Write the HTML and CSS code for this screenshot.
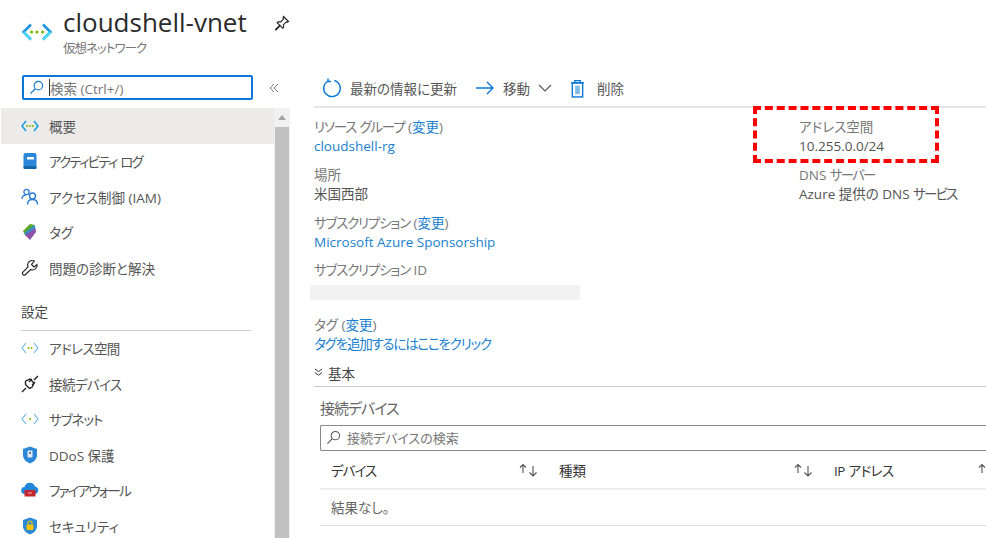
FILE: index.html
```html
<!DOCTYPE html>
<html lang="ja">
<head>
<meta charset="utf-8">
<title>cloudshell-vnet</title>
<link rel="stylesheet" href="styles.css">
</head>
<body>
<div class="app">
  <header class="blade-head">
    <svg class="head-icon" viewBox="0 0 32 20" width="32" height="20"><path d="M10 2.500 2.500 10l7.500 7.500h0" fill="none" stroke="#1f95e2" stroke-width="2.600"/><path d="m22 2.500 7.500 7.500-7.500 7.500" fill="none" stroke="#1f95e2" stroke-width="2.600"/><path d="M2.500 10l7.500 7.500M29.500 10 22 17.500" fill="none" stroke="#4fd6f5" stroke-width="2.600"/><circle cx="10.500" cy="10" r="1.600" fill="#7fba00"/><circle cx="16" cy="10" r="1.600" fill="#7fba00"/><circle cx="21.500" cy="10" r="1.600" fill="#7fba00"/></svg>
    <div class="head-text">
      <h1>cloudshell-vnet</h1>
      <p class="tight">仮想ネットワーク</p>
    </div>
    <svg class="pin" viewBox="0 0 16 16" width="16" height="16"><path d="m9.500 1.500 5 5-1.200.8-1-.4-2.800 2.800.2 2.600-1 1-2.500-2.700-4.200 4.400-.5-.5 4.300-4.300-2.700-2.500 1-1 2.600.2 2.800-2.800-.4-1z" fill="none" stroke="#222" stroke-width="1.100"/></svg>
  </header>
  <div class="blade-body">
    <aside class="side">
      <div class="side-search-row">
        <div class="side-search">
          <svg viewBox="0 0 16 16" width="15" height="15"><circle cx="10" cy="6" r="4.500" fill="none" stroke="#0a78d4" stroke-width="1.200"/><path d="M6.700 9.300 1.500 14.500" stroke="#0a78d4" stroke-width="1.300"/></svg>
          <span class="caret"></span><span class="ph">検索 (Ctrl+/)</span>
        </div>
        <svg class="collapse" viewBox="0 0 10 10" width="10" height="10"><path d="M5 1 1 5l4 4M9 1 5 5l4 4" fill="none" stroke="#777" stroke-width="1"/></svg>
      </div>
      <div class="side-scroll">
        <nav class="menu">
          <a class="item active"><svg class="ic" viewBox="0 0 18 12"><path d="M5 1 1 6l4 5M13 1l4 5-4 5" fill="none" stroke="#1b9fe0" stroke-width="1.600"/><circle cx="6" cy="6" r="1" fill="#7fba00"/><circle cx="9" cy="6" r="1" fill="#7fba00"/><circle cx="12" cy="6" r="1" fill="#7fba00"/></svg>概要</a>
          <a class="item"><svg class="ic" viewBox="0 0 18 18"><rect x="2.500" y="1" width="13" height="16" rx="2" fill="#2b88d8"/><rect x="2.500" y="14" width="13" height="3" rx="1" fill="#1565a8"/><rect x="6" y="5" width="7" height="2.500" fill="#fff"/></svg><span class="tighter">アクティビティ ログ</span></a>
          <a class="item"><svg class="ic" viewBox="0 0 18 18"><circle cx="5.500" cy="4" r="2.600" fill="none" stroke="#2b7cd3" stroke-width="1.300"/><path d="M1 11c0-2.500 1.500-4 4-4" fill="none" stroke="#2b7cd3" stroke-width="1.300"/><circle cx="11.500" cy="8" r="3" fill="none" stroke="#2b7cd3" stroke-width="1.400"/><path d="M6.500 16.500c0-3 2-5 5-5s5 2 5 5" fill="none" stroke="#2b7cd3" stroke-width="1.400"/></svg>アクセス制御 (IAM)</a>
          <a class="item"><svg class="ic" viewBox="0 0 18 18"><path d="M2 8 9 1l5 1-10 10z" fill="#5ea52c"/><path d="m3.500 10 10-8 1 3-10 8z" fill="#2f8fd0"/><path d="m4 12 10.500-7 .5 4-6 8z" fill="#8a53a8"/></svg>タグ</a>
          <a class="item"><svg class="ic" viewBox="0 0 18 18"><path d="M11 1.500a4.500 4.500 0 0 0-4 6.300L1.500 13.500a1.800 1.800 0 0 0 0 1.500l1 1a1.800 1.800 0 0 0 1.500 0l5.700-5.500A4.500 4.500 0 0 0 16 5.500l-3 2.500-2.500-2.500 2.800-3.400A4.500 4.500 0 0 0 11 1.500z" fill="none" stroke="#222" stroke-width="1.100"/></svg>問題の診断と解決</a>
        </nav>
        <h2 class="side-group">設定</h2>
        <nav class="menu">
          <a class="item"><svg class="ic" viewBox="0 0 18 12"><path d="M5 1 1 6l4 5M13 1l4 5-4 5" fill="none" stroke="#62b5e5" stroke-width="1.100"/><circle cx="7.500" cy="6" r="1" fill="#7fba00"/><circle cx="10.500" cy="6" r="1" fill="#7fba00"/></svg><span class="tight-s">アドレス空間</span></a>
          <a class="item"><svg class="ic" viewBox="0 0 18 18"><path d="M1 17l4-4M13 5l4-4M4.500 9.500l4 4 2-1a3 3 0 0 0 1-1l1.500-3.500-4-4-3.500 1.500a3 3 0 0 0-1 1z" fill="none" stroke="#222" stroke-width="1.400"/><path d="m8 7 3-3M11 10l3-3" stroke="#222" stroke-width="1.200"/></svg><span class="tight-s">接続デバイス</span></a>
          <a class="item"><svg class="ic" viewBox="0 0 18 12"><path d="M5 1 1 6l4 5M13 1l4 5-4 5" fill="none" stroke="#62b5e5" stroke-width="1.100"/><circle cx="9" cy="6" r="1.100" fill="#7fba00"/></svg><span class="tight">サブネット</span></a>
          <a class="item"><svg class="ic" viewBox="0 0 18 18"><path d="M9 .5 16 3v6c0 4-3 7-7 8.500C5 16 2 13 2 9V3z" fill="#2b88d8"/><rect x="6.500" y="4.500" width="5" height="7" rx="1" fill="#dfeaf4"/><rect x="8" y="6" width="2" height="2" fill="#5a7f9e"/></svg>DDoS 保護</a>
          <a class="item"><svg class="ic" viewBox="0 0 18 18"><path d="M4 13a3.500 3.500 0 0 1-.5-7A5.500 5.500 0 0 1 14 5.500a3.800 3.800 0 0 1 0 7.500z" fill="#1f86d9"/><rect x="3.500" y="9" width="11" height="6.500" fill="#c4262e"/><path d="M7 12h4" stroke="#f3b0b0" stroke-width="1"/></svg><span class="tighter">ファイアウォール</span></a>
          <a class="item"><svg class="ic" viewBox="0 0 18 18"><path d="M9 .5 16 3v6c0 4-3 7-7 8.500C5 16 2 13 2 9V3z" fill="#2b88d8"/><rect x="5.500" y="7.500" width="7" height="5.500" rx="1" fill="#f2c200"/><path d="M7 7.500V6a2 2 0 0 1 4 0v1.500" fill="none" stroke="#f2c200" stroke-width="1.200"/></svg>セキュリティ</a>
        </nav>
        <div class="scrollbar"><span class="arrow"></span><span class="thumb"></span></div>
      </div>
    </aside>
    <main class="main">
      <div class="toolbar">
        <span class="tool"><svg viewBox="0 0 20 20" width="20" height="20"><path d="M12.300 2.300A8.300 8.300 0 1 1 6 3" fill="none" stroke="#0a78d4" stroke-width="1.400"/><path d="M6 .5V3.500H9" fill="none" stroke="#0a78d4" stroke-width="1.400"/></svg>最新の情報に更新</span>
        <span class="tool"><svg viewBox="0 0 20 14" width="20" height="14"><path d="M1 7h17M12 1l6 6-6 6" fill="none" stroke="#0a78d4" stroke-width="1.400"/></svg>移動<svg class="chev" viewBox="0 0 14 8" width="14" height="8"><path d="m1 1 6 6 6-6" fill="none" stroke="#555" stroke-width="1.100"/></svg></span>
        <span class="tool tool-del"><svg viewBox="0 0 16 20" width="15" height="19"><path d="M1 4h14M5 4V1.500h6V4" fill="none" stroke="#0a78d4" stroke-width="1.400"/><rect x="2.500" y="4" width="11" height="15" fill="none" stroke="#0a78d4" stroke-width="1.500"/><rect x="5.500" y="7" width="5" height="9" fill="#7fbde8"/></svg>削除</span>
      </div>
      <section class="props">
        <div class="col-left">
          <dl class="prop"><dt><span class="tight-m">リソース グループ</span> (<a>変更</a>)</dt><dd><a>cloudshell-rg</a></dd></dl>
          <dl class="prop"><dt>場所</dt><dd>米国西部</dd></dl>
          <dl class="prop"><dt><span class="tight-m">サブスクリプション</span> (<a>変更</a>)</dt><dd><a>Microsoft Azure Sponsorship</a></dd></dl>
          <dl class="prop"><dt><span class="tight-m">サブスクリプション</span> ID</dt><dd class="masked"></dd></dl>
        </div>
        <div class="col-right">
          <dl class="prop"><dt>アドレス空間</dt><dd>10.255.0.0/24</dd></dl>
          <dl class="prop"><dt>DNS <span class="tighter">サーバー</span></dt><dd>Azure 提供の DNS <span class="tighter">サービス</span></dd></dl>
        </div>
        <div class="callout"></div>
      </section>
      <dl class="prop tags"><dt>タグ (<a>変更</a>)</dt><dd><a class="tight-m">タグを追加するにはここをクリック</a></dd></dl>
      <div class="section-head"><svg viewBox="0 0 10 10" width="9" height="9"><path d="m1 1 4 3 4-3M1 5l4 3 4-3" fill="none" stroke="#333" stroke-width="1.100"/></svg>基本</div>
      <div class="devices">
        <h3 class="tight">接続デバイス</h3>
        <div class="dev-search"><svg viewBox="0 0 16 16" width="15" height="15"><circle cx="10" cy="6" r="4.500" fill="none" stroke="#555" stroke-width="1.100"/><path d="M6.700 9.300 1.500 14.500" stroke="#555" stroke-width="1.200"/></svg>接続デバイスの検索</div>
        <div class="table-head">
          <span class="th th-a"><span class="tight">デバイス</span><svg class="sort" viewBox="0 0 20 14" width="20" height="14"><path d="M4 10V2M1 4.500 4 1.500l3 3M14 3v9.500M10.500 9.500l3.500 3.500 3.500-3.500" fill="none" stroke="#555" stroke-width="1.100"/></svg></span>
          <span class="th th-b">種類<svg class="sort" viewBox="0 0 20 14" width="20" height="14"><path d="M4 10V2M1 4.500 4 1.500l3 3M14 3v9.500M10.500 9.500l3.500 3.500 3.500-3.500" fill="none" stroke="#555" stroke-width="1.100"/></svg></span>
          <span class="th th-c"><span class="tight-s">IP アドレス</span><svg class="sort" viewBox="0 0 20 14" width="20" height="14"><path d="M4 10V2M1 4.500 4 1.500l3 3M14 3v9.500M10.500 9.500l3.500 3.500 3.500-3.500" fill="none" stroke="#555" stroke-width="1.100"/></svg></span>
        </div>
        <div class="table-row">結果なし。</div>
      </div>
    </main>
  </div>
</div>
</body>
</html>
```

FILE: styles.css
```css
* { box-sizing: border-box; }
html, body { margin: 0; height: 100%; overflow: hidden; background: #fff; }
body { font-family: "Open Sans", "Noto Sans CJK JP", sans-serif; font-size: 13px; color: #555; font-feature-settings: "palt"; }
a { color: #1a7fcf; text-decoration: none; }
dl, dd, dt, h1, h2, h3, p { margin: 0; font-weight: 400; }

.tight-s { letter-spacing: -.6px; word-spacing: 1px; }
.tight-m { letter-spacing: -1.200px; word-spacing: 1px; }
.tight { letter-spacing: -1px; }
.tighter { letter-spacing: -1.800px; word-spacing: 2px; }

.app { width: 986px; height: 538px; overflow: hidden; }

.blade-head { height: 70px; display: flex; align-items: flex-start; padding: 4px 0 0 21px; }
.head-icon { margin-top: 18px; flex: none; }
.head-text { margin-left: 10px; width: 211px; }
.head-text h1 { font-size: 26px; line-height: 36px; color: #2b2b2b; white-space: nowrap; }
.head-text p { font-size: 12.500px; line-height: 12px; color: #777; margin-top: 3px; }
.pin { margin-top: 11px; flex: none; }

.blade-body { display: flex; height: 468px; }

.side { width: 290px; flex: none; }
.side-search-row { height: 38px; display: flex; align-items: flex-start; padding-left: 22px; padding-top: 5px; }
.side-search { width: 231px; height: 25px; border: 2px solid #0a78d4; border-radius: 2px; display: flex; align-items: center; padding-left: 5px; }
.caret { width: 1px; height: 17px; background: #333; margin: 0 0 0 5px; }
.ph { color: #777; font-size: 13.500px; }
.collapse { margin-left: 16px; margin-top: 8px; flex: none; }

.side-scroll { position: relative; height: 430px; overflow: hidden; padding-right: 16px; }
.menu { display: flex; flex-direction: column; margin-left: 1px; }
.item { height: 35.500px; display: flex; align-items: center; padding-left: 20px; color: #555; font-size: 13.500px; white-space: nowrap; }
.item.active { background: #edebe9; }
.ic { width: 18px; height: 18px; margin-right: 10px; flex: none; }
.side-group { margin: 9px 22px 0 21px; width: 230px; height: 36px; border-bottom: 1px solid #ccc; font-size: 13.500px; line-height: 34px; color: #444; }

.scrollbar { position: absolute; top: 0; right: 0; width: 16px; height: 100%; background: #f1f1f1; display: flex; flex-direction: column; align-items: center; }
.arrow { margin-top: 7px; width: 0; height: 0; border: 4px solid transparent; border-top: 0; border-bottom: 5px solid #a3a3a3; }
.thumb { margin-top: 7px; width: 14px; flex: 1; background: #c1c1c1; }

.main { flex: 1; min-width: 0; padding-left: 24px; }
.toolbar { height: 38px; display: flex; align-items: center; gap: 18px; border-bottom: 2px solid #e6e6e6; padding-left: 8px; }
.tool { display: flex; align-items: center; gap: 8px; font-size: 13.500px; color: #555; white-space: nowrap; }
.tool-del { gap: 12px; }

.props { position: relative; display: flex; padding-top: 10px; }
.col-left { width: 485px; }
.col-right { flex: 1; }
.prop { margin-bottom: 9.800px; font-size: 13.500px; line-height: 19px; }
.prop dt { color: #777; white-space: nowrap; }
.prop dd { color: #555; white-space: nowrap; }
.masked { width: 270px; height: 15px; background: #f2f2f2; margin: 4.600px 0 0 -4px; }
.callout { position: absolute; left: 439px; top: -2px; width: 186px; height: 57px; border: 4px dashed #f00; }

.tags { margin: 6.700px 0 7.500px; }
.section-head { height: 25px; border-bottom: 1px solid #ccc; display: flex; align-items: center; gap: 5px; font-size: 13.500px; color: #444; padding-bottom: 2px; }

.devices { padding-left: 6px; padding-top: 11px; }
.devices h3 { font-size: 15px; line-height: 21px; color: #666; }
.dev-search { margin-top: 6px; height: 26px; border: 1px solid #888; border-right: 0; border-radius: 2px 0 0 2px; display: flex; align-items: center; gap: 6px; padding-left: 5px; font-size: 13px; color: #777; }
.table-head { height: 39px; display: flex; align-items: center; border-bottom: 2px solid #f0f0f0; padding: 1px 0 0 11px; font-size: 13.500px; color: #333; white-space: nowrap; }
.th { display: flex; justify-content: space-between; align-items: center; flex: none; }
.th-a { width: 208px; }
.th-b { width: 255px; margin-left: 20px; }
.th-c { width: 164px; margin-left: 20px; }
.sort { flex: none; }
.table-row { height: 36px; border-bottom: 1px solid #ddd; padding-left: 11px; display: flex; align-items: center; font-size: 13.500px; color: #666; }
```
